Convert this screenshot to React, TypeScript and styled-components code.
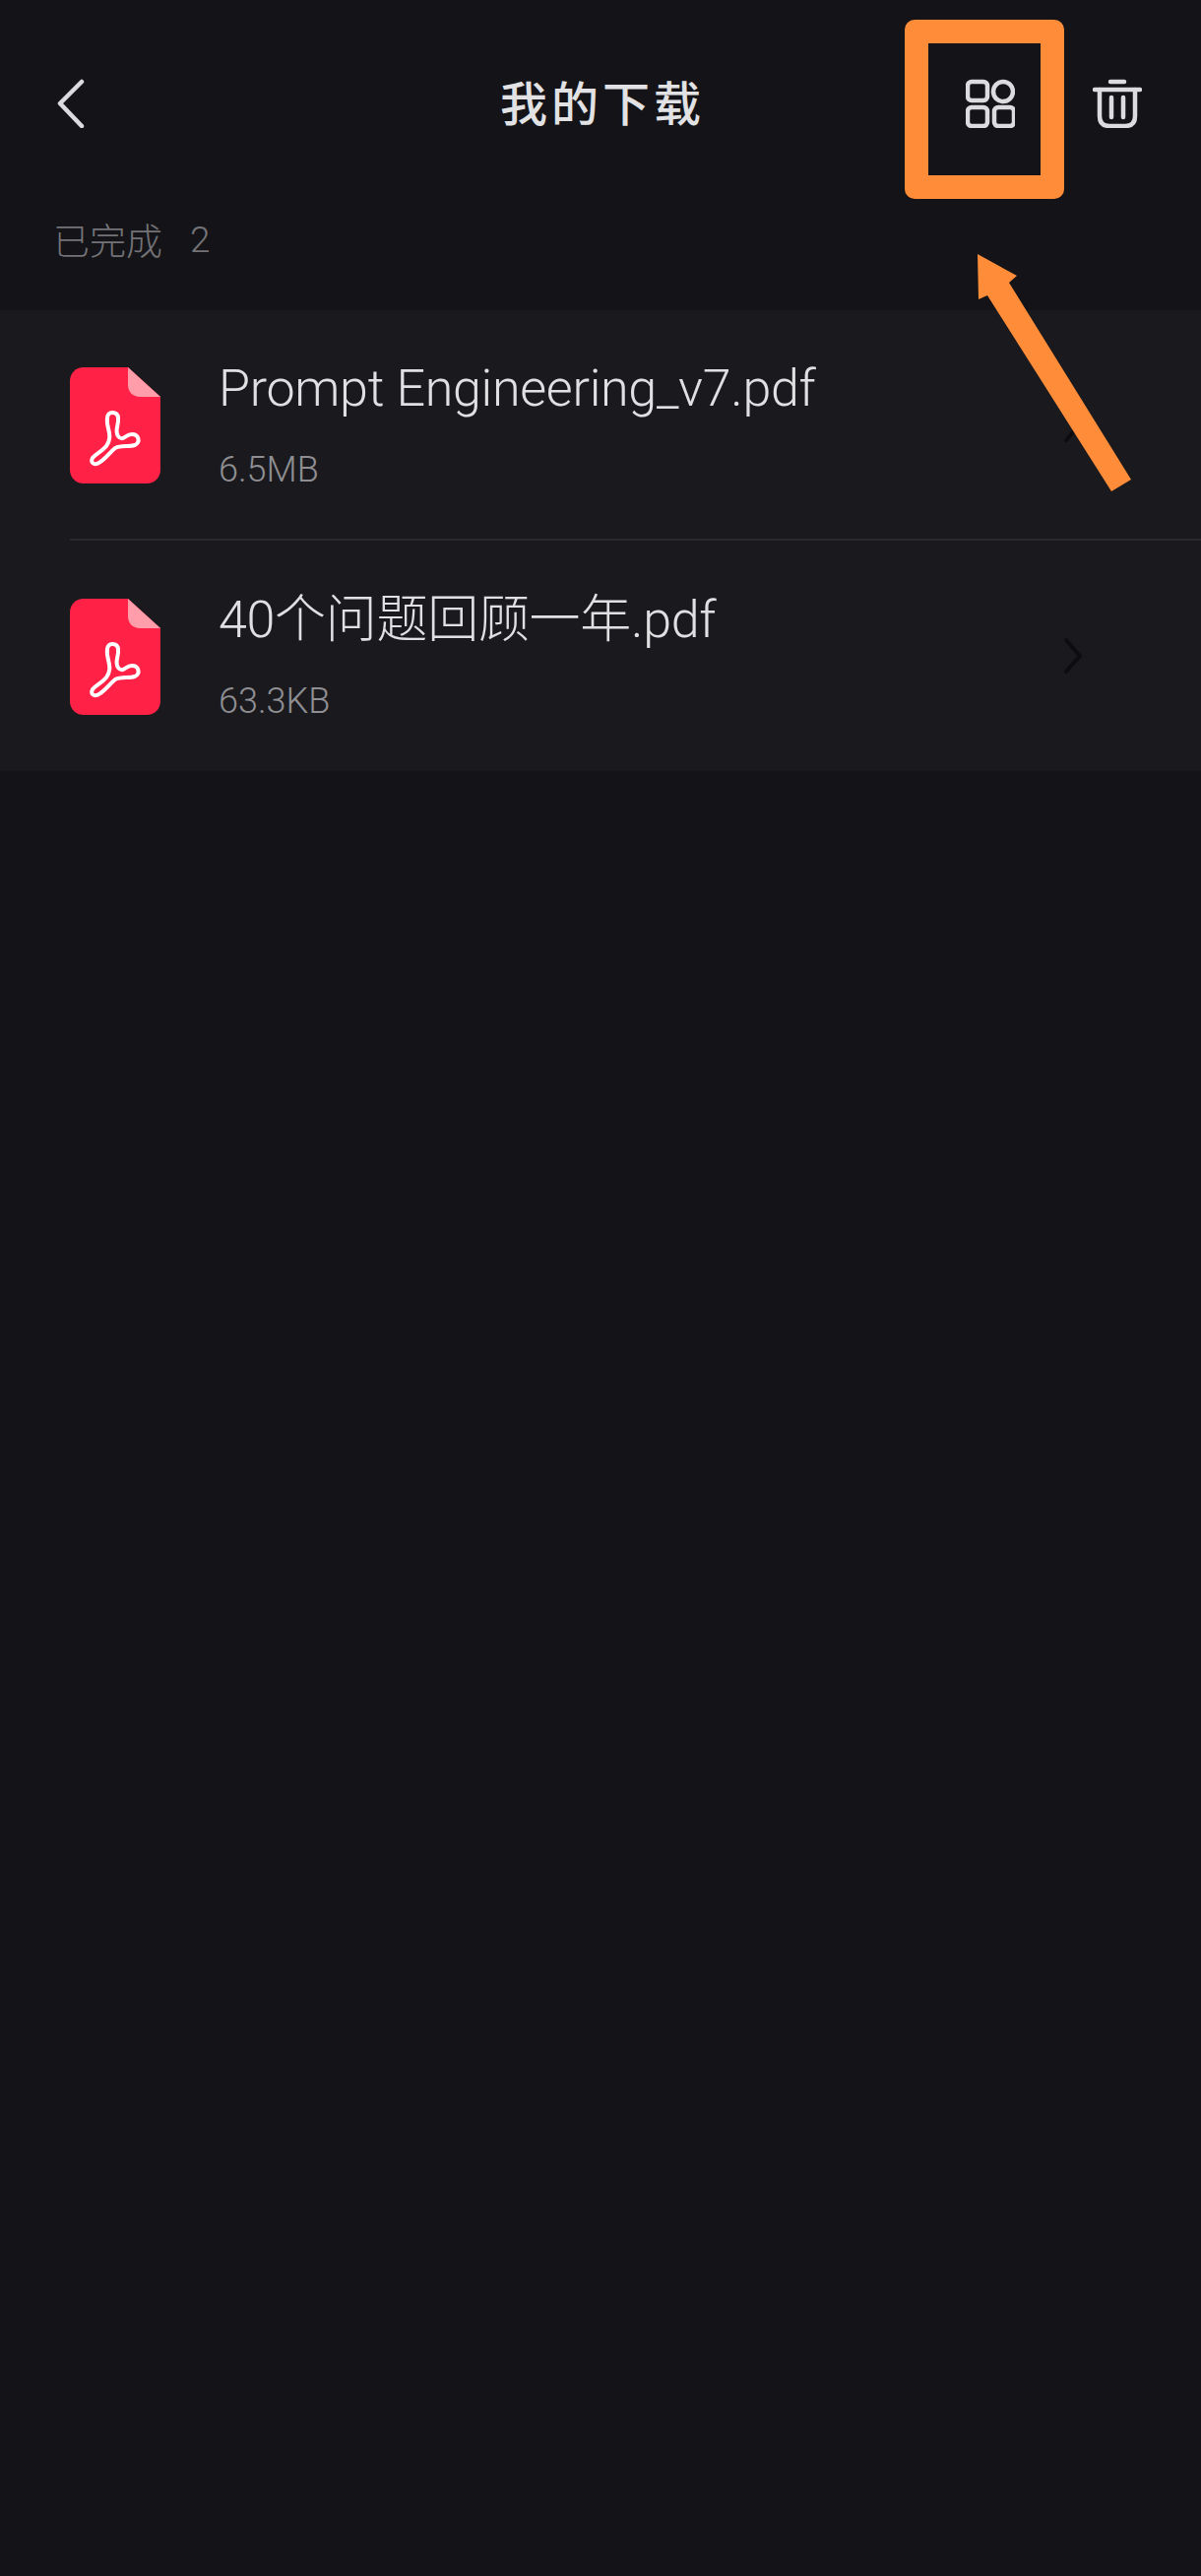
import styled, { createGlobalStyle } from "styled-components";

const GlobalStyle = createGlobalStyle`
  html, body {
    margin: 0;
    padding: 0;
    background: #141418;
  }
`;

const Page = styled.div`
  position: relative;
  width: 1220px;
  height: 2616px;
  overflow: hidden;
  background: #141418;
  font-family: Roboto, "Noto Sans CJK SC", sans-serif;
`;

const Header = styled.header`
  display: grid;
  grid-template-columns: 1fr auto 1fr;
  align-items: center;
  height: 210px;
  padding: 0 60px 0 58px;
`;

const Title = styled.h1`
  margin: -6px 0 0 6px;
  font-size: 48px;
  font-weight: 500;
  letter-spacing: 4px;
  color: #e2e2e4;
`;

const Actions = styled.div`
  display: flex;
  justify-content: flex-end;
  align-items: center;
  gap: 79px;
`;

const IconSvg = styled.svg`
  display: block;
  fill: none;
  stroke: #dcdcdf;
  stroke-width: 4.5;
  stroke-linecap: round;
  stroke-linejoin: round;
`;

const SectionLabel = styled.div`
  display: flex;
  align-items: center;
  gap: 28px;
  height: 66px;
  margin-bottom: 39px;
  padding-left: 54px;
  font-size: 37px;
  font-weight: 300;
  color: #737377;
`;

const List = styled.ul`
  margin: 0;
  padding: 0;
  list-style: none;
  background: #1a1a1e;
`;

const Row = styled.li<{ $divider?: boolean }>`
  display: flex;
  align-items: center;
  height: 234px;
  margin-left: 71px;
  padding-right: 120px;
  box-sizing: border-box;
  border-bottom: ${(p) => (p.$divider ? "2px solid #2a2a2e" : "none")};
`;

const FileIconSvg = styled.svg`
  display: block;
  flex-shrink: 0;
  margin-top: 2px;
`;

const FileText = styled.div`
  flex: 1;
  margin-left: 59px;
  display: flex;
  flex-direction: column;
  gap: 26px;
`;

const FileName = styled.div`
  font-size: 52px;
  line-height: 66px;
  font-weight: 300;
  letter-spacing: -0.3px;
  color: #e0e0e2;
`;

const FileSize = styled.div`
  font-size: 36px;
  line-height: 46px;
  font-weight: 300;
  color: #8f8f93;
`;

const Chevron = styled.svg`
  display: block;
  fill: none;
  stroke: #0d0d0f;
  stroke-width: 4;
  stroke-linecap: round;
  stroke-linejoin: round;
`;

const HighlightBox = styled.div`
  position: absolute;
  left: 919px;
  top: 20px;
  width: 162px;
  height: 182px;
  box-sizing: border-box;
  border: 24px solid #ff8c38;
  border-radius: 10px;
`;

const ArrowMark = styled.svg`
  position: absolute;
  left: 980px;
  top: 250px;
  fill: #ff8c38;
`;

const BackIcon = () => (
  <IconSvg width="28" height="50" viewBox="0 0 28 50">
    <polyline points="25,3 3,25 25,48" />
  </IconSvg>
);

const GridIcon = () => (
  <IconSvg width="50" height="50" viewBox="0 0 50 50">
    <rect x="2" y="3" width="20" height="19" rx="4" />
    <circle cx="38" cy="13" r="10" />
    <rect x="2" y="29" width="20" height="19" rx="4" />
    <rect x="29" y="29" width="20" height="19" rx="4" />
  </IconSvg>
);

const TrashIcon = () => (
  <IconSvg width="50" height="50" viewBox="0 0 50 50">
    <line x1="18" y1="3" x2="32" y2="3" />
    <line x1="2" y1="11" x2="48" y2="11" />
    <path d="M7 11 V38 C7 45 11 48 17 48 H33 C39 48 43 45 43 38 V11" />
    <line x1="19" y1="19" x2="19" y2="39" />
    <line x1="31" y1="19" x2="31" y2="39" />
  </IconSvg>
);

const PdfIcon = () => (
  <FileIconSvg width="92" height="118" viewBox="0 0 92 118">
    <path d="M14 0 H59 L92 30 V104 C92 112 86 118 78 118 H14 C6 118 0 112 0 104 V14 C0 6 6 0 14 0 Z" fill="#ff2146" />
    <path d="M59 0 L92 30 H71 C64 30 59 25 59 18 Z" fill="#ff9dab" />
    <path
      d="M43 46 C37 46 37 54 39 62 C41 70 41 74 37 80 C32 86 26 88 23 92 C20 98 26 100 31 96 C37 92 41 86 46 82 C52 79 60 81 66 79 C72 76 70 68 63 68 C56 68 54 76 49 70 C45 64 50 58 49 52 C49 48 47 46 43 46 Z"
      fill="none"
      stroke="#ffffff"
      strokeWidth="4"
      strokeLinejoin="round"
    />
  </FileIconSvg>
);

const files = [
  { name: "Prompt Engineering_v7.pdf", size: "6.5MB" },
  { name: "40个问题回顾一年.pdf", size: "63.3KB" },
];

export default function App() {
  return (
    <Page>
      <GlobalStyle />
      <Header>
        <BackIcon />
        <Title>我的下载</Title>
        <Actions>
          <GridIcon />
          <TrashIcon />
        </Actions>
      </Header>
      <SectionLabel>
        <span>已完成</span>
        <span>2</span>
      </SectionLabel>
      <List>
        {files.map((file, i) => (
          <Row key={file.name} $divider={i === 0}>
            <PdfIcon />
            <FileText>
              <FileName>{file.name}</FileName>
              <FileSize>{file.size}</FileSize>
            </FileText>
            <Chevron width="20" height="38" viewBox="0 0 20 38">
              <polyline points="3,3 17,19 3,35" />
            </Chevron>
          </Row>
        ))}
      </List>
      <HighlightBox />
      <ArrowMark width="180" height="260" viewBox="0 0 180 260">
        <polygon points="13,8 53,30 45,37 169,237 149,249 23,50 14,54" />
      </ArrowMark>
    </Page>
  );
}
